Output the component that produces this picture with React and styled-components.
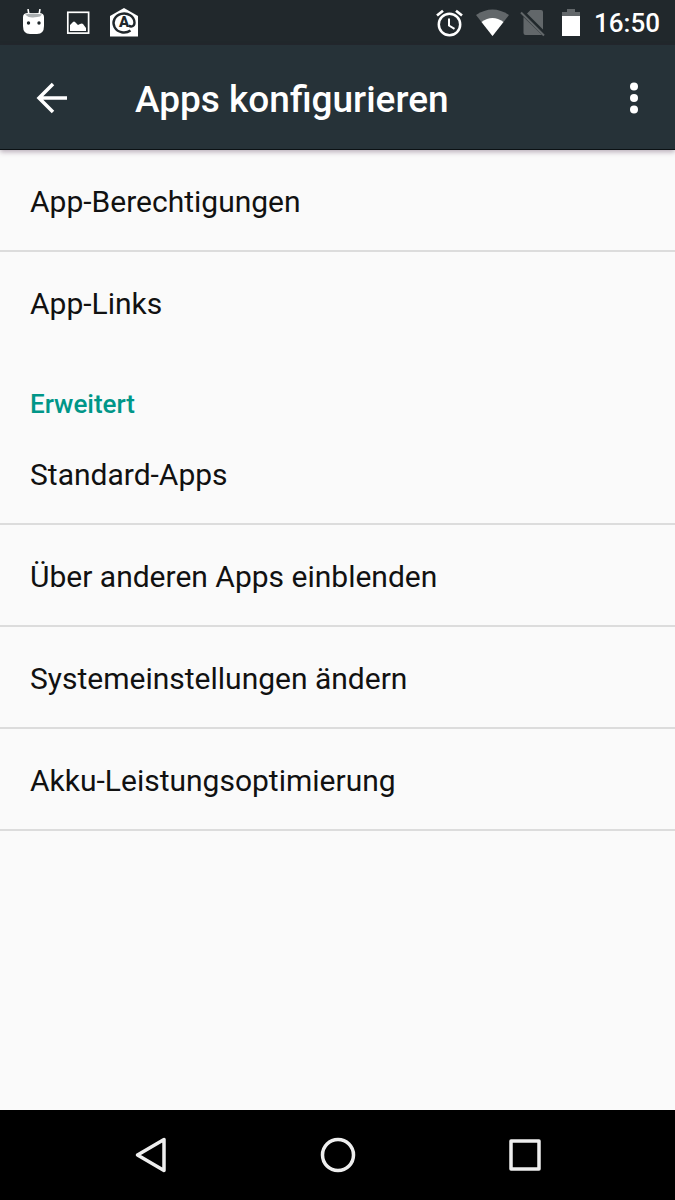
import React from 'react';
import styled, { createGlobalStyle } from 'styled-components';

const GlobalStyle = createGlobalStyle`
  * { box-sizing: border-box; }
  body { margin: 0; background: #fafafa; font-family: Roboto, sans-serif; }
  button { padding: 0; border: 0; background: none; color: inherit; font: inherit; cursor: pointer; }
  svg { display: block; flex: none; }
`;

const Screen = styled.div`
  display: flex;
  flex-direction: column;
  min-height: 100vh;
`;

const StatusBar = styled.div`
  display: flex;
  align-items: center;
  justify-content: space-between;
  height: 45px;
  padding: 0 15px 0 22px;
  background: #21282c;
  color: #fff;
`;

const StatusGroup = styled.div`
  display: flex;
  align-items: center;
  gap: ${({ $gap }) => $gap}px;
`;

const Clock = styled.time`
  font-size: 26px;
  font-weight: 500;
  line-height: 32px;
`;

const Toolbar = styled.header`
  display: flex;
  align-items: center;
  height: 105px;
  padding: 2px 18px 0 29px;
  border-bottom: 1px solid #0b1114;
  background: #263238;
  box-shadow: 0 2px 5px rgba(60, 30, 60, 0.35);
  color: #fff;
`;

const Title = styled.h1`
  flex: 1;
  margin: 0 0 0 60px;
  padding-top: 3px;
  font-size: 37px;
  font-weight: 500;
  line-height: 44px;
`;

const IconButton = styled.button`
  display: flex;
  align-items: center;
  justify-content: center;
  width: 46px;
  height: 60px;
`;

const Settings = styled.main`
  flex: 1;
`;

const List = styled.ul`
  margin: 0;
  padding: 0;
  list-style: none;
`;

const Item = styled.li`
  border-bottom: 2px solid ${({ $last }) => ($last ? 'transparent' : '#dcdcdc')};
`;

const ItemButton = styled.button`
  display: block;
  width: 100%;
  height: 100px;
  padding: 4px 30px 0;
  color: #111;
  font-size: 30px;
  line-height: 36px;
  text-align: left;
`;

const Category = styled.h2`
  margin: 0;
  padding: 34px 30px 3px;
  color: #009688;
  font-size: 26px;
  font-weight: 500;
  line-height: 32px;
`;

const NavBar = styled.nav`
  display: flex;
  justify-content: center;
  height: 90px;
  background: #000;
  color: #eee;
`;

const NavButton = styled.button`
  display: flex;
  align-items: center;
  justify-content: center;
  width: 187px;
`;

const AndroidIcon = () => (
  <svg width="24" height="28" viewBox="0 0 24 28">
    <path d="M6 0l1 6M18 0l-1 6" stroke="#fff" strokeWidth="1.6" />
    <path d="M1 8q0-4 5-4h11q5 0 5 4v9q0 8-7 8H8q-7 0-7-8z" fill="#fff" />
    <path d="M3 5.500q8-2 17 0l-2 2q-6 1-8 1-4 0-7-3z" fill="#aaafb1" />
    <circle cx="6.500" cy="14" r="1.700" fill="#21282c" />
    <circle cx="17" cy="14" r="1.700" fill="#21282c" />
  </svg>
);

const PictureIcon = () => (
  <svg width="24" height="24" viewBox="0 0 24 24">
    <rect x="1.800" y="1.300" width="20.800" height="20.800" fill="none" stroke="#fff" strokeWidth="1.700" />
    <path d="M4 20v-6l3-3q1-1 2 0l3 3 2-1q2-1 3 0l3 4v3z" fill="#fff" />
  </svg>
);

const MailIcon = () => (
  <svg width="28" height="30" viewBox="0 0 28 30">
    <path d="M14 0l14 8v20.500H0V8z" fill="#fff" />
    <path d="M20.500 22.500A10.500 9.500 0 1 1 24.500 14.500C24.500 18.500 21 19.500 18.800 17.500" fill="none" stroke="#21282c" strokeWidth="2.400" />
    <text x="14" y="19" textAnchor="middle" fontSize="15" fontWeight="900" fill="#21282c">A</text>
  </svg>
);

const AlarmIcon = () => (
  <svg width="30" height="28" viewBox="0 0 30 28" fill="none" stroke="#fff">
    <circle cx="13.500" cy="15.500" r="10.700" strokeWidth="2.500" />
    <path d="M1 6.500L7 1.700M26 6.500L20 1.700" strokeWidth="2.700" />
    <path d="M13 9.500v7l5.500 3.300" strokeWidth="2" />
  </svg>
);

const WifiIcon = () => (
  <svg width="34" height="28" viewBox="0 0 34 28">
    <path d="M0 6Q16.500-5 33 6L16.500 27z" fill="#62676a" />
    <path d="M5.500 13q11-8 22 0l-11 14z" fill="#fff" />
  </svg>
);

const NoSimIcon = () => (
  <svg width="28" height="28" viewBox="0 0 28 28">
    <path d="M10.500 1H21q2 0 2 2v17.500L7 4.500zM3.500 8L22 26H5.500q-2 0-2-2z" fill="#62676a" />
    <path d="M1 3.500L24 26.500" stroke="#62676a" strokeWidth="2" />
  </svg>
);

const BatteryIcon = () => (
  <svg width="26" height="28" viewBox="0 0 26 28">
    <path d="M9 0h8v3h5v5H4V3h5z" fill="#62676a" />
    <path d="M4 7h18v20H4z" fill="#fff" />
  </svg>
);

const BackArrow = () => (
  <svg width="32" height="32" viewBox="0 0 32 32" fill="none" stroke="#fff" strokeWidth="3.500">
    <path d="M31 16H3M17 2L3 16l14 14" />
  </svg>
);

const Dots = () => (
  <svg width="10" height="32" viewBox="0 0 10 32" fill="#fff">
    <circle cx="5" cy="4.500" r="4" />
    <circle cx="5" cy="16" r="4" />
    <circle cx="5" cy="27.500" r="4" />
  </svg>
);

function SettingsList({ items, endLine }) {
  return (
    <List>
      {items.map((item, i) => (
        <Item key={item} $last={!endLine && i === items.length - 1}>
          <ItemButton>{item}</ItemButton>
        </Item>
      ))}
    </List>
  );
}

function App() {
  return (
    <Screen>
      <GlobalStyle />
      <StatusBar>
        <StatusGroup $gap={20}>
          <AndroidIcon />
          <PictureIcon />
          <MailIcon />
        </StatusGroup>
        <StatusGroup $gap={10}>
          <AlarmIcon />
          <WifiIcon />
          <NoSimIcon />
          <BatteryIcon />
          <Clock>16:50</Clock>
        </StatusGroup>
      </StatusBar>
      <Toolbar>
        <IconButton aria-label="Zurück"><BackArrow /></IconButton>
        <Title>Apps konfigurieren</Title>
        <IconButton aria-label="Weitere Optionen"><Dots /></IconButton>
      </Toolbar>
      <Settings>
        <SettingsList items={['App-Berechtigungen', 'App-Links']} />
        <Category>Erweitert</Category>
        <SettingsList
          endLine
          items={[
            'Standard-Apps',
            'Über anderen Apps einblenden',
            'Systemeinstellungen ändern',
            'Akku-Leistungsoptimierung',
          ]}
        />
      </Settings>
      <NavBar>
        <NavButton aria-label="Zurück">
          <svg width="36" height="36" viewBox="0 0 36 36" fill="none" stroke="currentColor" strokeWidth="3.500" strokeLinejoin="round">
            <path d="M31 2.500v31L4.500 18z" />
          </svg>
        </NavButton>
        <NavButton aria-label="Startseite">
          <svg width="36" height="36" viewBox="0 0 36 36" fill="none" stroke="currentColor" strokeWidth="3.500">
            <circle cx="18" cy="18" r="15.500" />
          </svg>
        </NavButton>
        <NavButton aria-label="Übersicht">
          <svg width="36" height="36" viewBox="0 0 36 36" fill="none" stroke="currentColor" strokeWidth="3.500" strokeLinejoin="round">
            <rect x="4" y="4" width="28" height="28" />
          </svg>
        </NavButton>
      </NavBar>
    </Screen>
  );
}

export default App;
